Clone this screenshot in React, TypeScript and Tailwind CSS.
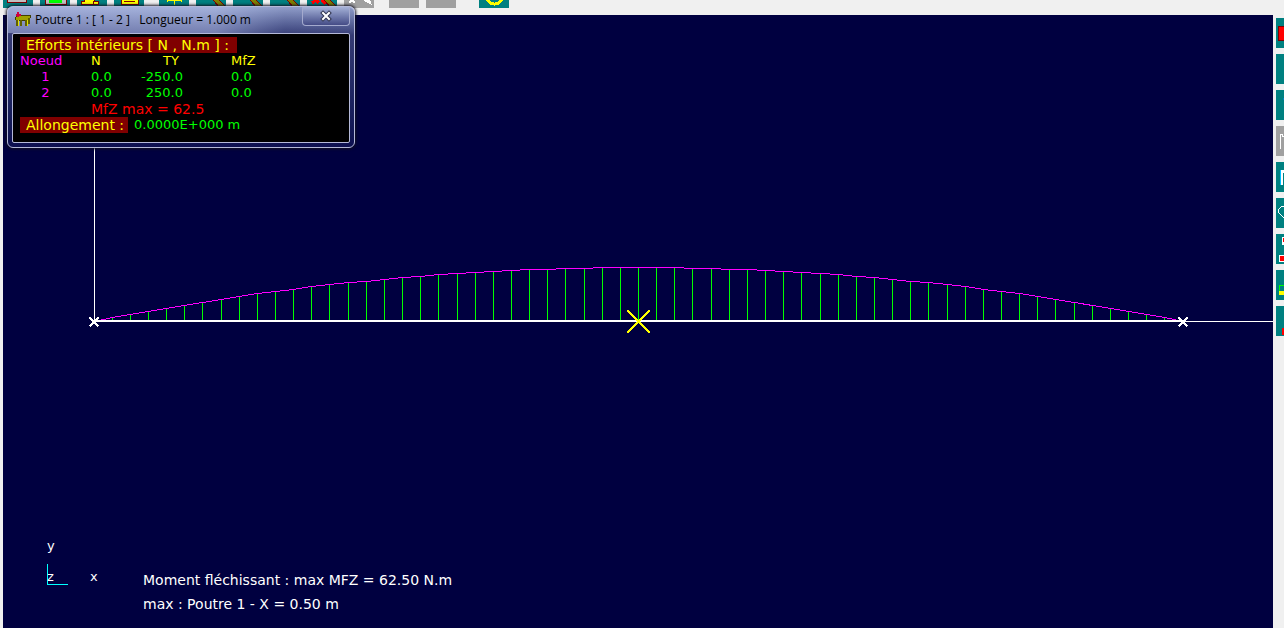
import type { ReactNode } from 'react';

type Tool = { label: string; disabled?: boolean; gap?: string; icon?: ReactNode };

const PENCIL = (
  <g>
    <path d="M17 0h6l7 7-2 1h-5z" fill="#808000" />
    <path d="M17 0l7 8M23 0l7 7" stroke="#800000" />
  </g>
);

const TOP_TOOLS: Tool[] = [
  { label: 'Nouveau', icon: <path d="M4 -4h19v6H4z" fill="#c0c0c0" stroke="#800000" /> },
  {
    label: 'Enregistrer',
    gap: 'ml-[7px]',
    icon: (
      <g>
        <path d="M5 -4h21v8H5z" fill="#c0c0c0" stroke="#800000" />
        <path d="M9 -4h13v7H9z" fill="#00ff00" />
      </g>
    ),
  },
  {
    label: 'Ouvrir',
    gap: 'ml-[7px]',
    icon: <path d="M4 4V1h3v-5h10V1h4v3H4zM16 4v-3h5" fill="#ffff00" stroke="#800000" />,
  },
  {
    label: 'Note',
    gap: 'ml-[7px]',
    icon: (
      <g>
        <path d="M7 -4h17v8H7z" fill="#ffff00" stroke="#800000" />
        <path d="M10 1h11" stroke="#800000" />
      </g>
    ),
  },
  {
    label: 'Noeuds',
    gap: 'ml-[15px]',
    icon: <path d="M15 0v5M8 0h14M8 0v2M22 0v2" fill="none" stroke="#ffff00" />,
  },
  { label: 'Poutres', gap: 'ml-[7px]', icon: PENCIL },
  { label: 'Liaisons', gap: 'ml-[7px]', icon: PENCIL },
  { label: 'Charges', gap: 'ml-[7px]', icon: PENCIL },
  {
    label: 'Supprimer',
    gap: 'ml-[7px]',
    icon: (
      <g>
        <path d="M5 3l4-3 3 3M15 0l4 4" fill="none" stroke="#ff0000" strokeWidth="3" />
        {PENCIL}
      </g>
    ),
  },
  {
    label: 'Calculer',
    gap: 'ml-[7px]',
    disabled: true,
    icon: <path d="M5 3l3-3 3 3M20 0l6 3-1-3z" fill="none" stroke="#ffffff" strokeWidth="2" />,
  },
  { label: 'Annuler', gap: 'ml-[15px]', disabled: true },
  { label: 'Rétablir', gap: 'ml-[7px]', disabled: true },
  {
    label: 'Aide',
    gap: 'ml-[23px]',
    icon: <circle cx="15.5" cy="-4" r="8" fill="none" stroke="#ffff00" strokeWidth="3" />,
  },
];

const SIDE_TOOLS: Tool[] = [
  { label: 'Structure', icon: <path d="M2.500 8.500h20v14h-20z" fill="#ff0000" stroke="#800000" /> },
  { label: 'Déformée' },
  { label: 'Réactions', icon: <path d="M7 8h2v2H7z" fill="#0080c0" /> },
  {
    label: 'Effort normal',
    disabled: true,
    icon: <path d="M4.500 23V8.500h2v2h3" fill="none" stroke="#ffffff" />,
  },
  {
    label: 'Moment fléchissant',
    icon: (
      <g>
        <path d="M4 8h2v15H4z" fill="#00c0ff" />
        <path d="M5 8h5v3H7v12H5z" fill="#ffffff" />
        <path d="M8 11h2v12H8z" fill="#ff8040" />
      </g>
    ),
  },
  {
    label: 'Contraintes',
    icon: <path d="M9 9.500L7.500 8.500H5.500L2.500 11.500V14.500L8.500 20.500" fill="none" stroke="#ffffff" />,
  },
  {
    label: 'Paramètres',
    icon: (
      <g>
        <path d="M6 3h8v8H6z" fill="#ffffff" />
        <path d="M7 4h6v4H7zM4 22h10v5H4z" fill="#ff0000" />
        <path d="M3.500 21.500h11v6h-11z" fill="none" stroke="#ffffff" />
      </g>
    ),
  },
  {
    label: 'Légende',
    icon: (
      <g>
        <path d="M3.500 21v-5l2-1h6" fill="none" stroke="#00ff00" />
        <path d="M3 21h10v4H3z" fill="#ffff00" />
      </g>
    ),
  },
  { label: 'Imprimer', icon: <path d="M6 22h10v7H6z" fill="#ff0000" /> },
];

const FORCES = [
  { node: 1, n: '0.0', ty: '-250.0', mfz: '0.0' },
  { node: 2, n: '0.0', ty: '250.0', mfz: '0.0' },
];

// Beam geometry in canvas units
const X0 = 91;
const X1 = 1180;
const BASE = 306;
const PEAK = 54;
const STEPS = 60;

const samples = Array.from({ length: STEPS + 1 }, (_, i) => {
  const t = i / STEPS;
  return {
    x: Math.floor(X0 + t * (X1 - X0)) + 0.5,
    y: Math.round(BASE - PEAK * 4 * t * (1 - t)) + 0.5,
  };
});

function ToolButton({ tool, side }: { tool: Tool; side?: boolean }) {
  return (
    <button
      type="button"
      aria-label={tool.label}
      disabled={tool.disabled}
      className={`block w-[30px] shrink-0 ${side ? 'h-[30px]' : 'h-2'} ${tool.gap ?? ''} ${
        tool.disabled ? 'bg-[#a0a0a0]' : 'bg-[#008080]'
      }`}
    >
      {tool.icon && (
        <svg className={side ? 'block h-[30px] w-[30px]' : 'block h-2 w-[30px]'} shapeRendering="crispEdges" aria-hidden="true">
          {tool.icon}
        </svg>
      )}
    </button>
  );
}

function MomentDiagram() {
  return (
    <svg viewBox="0 0 1270 613" className="block h-auto w-full" shapeRendering="crispEdges" role="img" aria-label="Moment fléchissant">
      <path d="M91.500 0V306M91 306.500H1270" stroke="#ffffff" />
      {samples.slice(1, -1).map((p) => (
        <path key={p.x} d={`M${p.x} ${p.y}V306`} stroke="#00ff00" />
      ))}
      <polyline points={samples.map((p) => `${p.x},${p.y}`).join(' ')} fill="none" stroke="#ff00ff" />
      <path d="M91 306H1180" stroke="#ffffff" strokeWidth="2" />
      <path d="M86.500 302.500l9 9M95.500 302.500l-9 9M1175.500 302.500l9 9M1184.500 302.500l-9 9" stroke="#ffffff" strokeWidth="2" />
      <path d="M625 296l21 21M646 296l-21 21" stroke="#ffff00" strokeWidth="2" strokeLinecap="square" />
      <path d="M44.500 549V569.500H65" fill="none" stroke="#00ffff" />
      <g fill="#ffffff" className="font-['DejaVu_Sans',sans-serif] text-[13px]">
        <text x="44" y="535">y</text>
        <text x="44" y="566">z</text>
        <text x="87" y="566">x</text>
      </g>
    </svg>
  );
}

function BeamWindow() {
  return (
    <section
      aria-label="Poutre 1"
      className="absolute left-[7px] top-[6px] w-[348px] rounded-md border border-[#b4b9d8] bg-linear-to-b from-[#b4c4ea] via-[#353b75] via-20% to-[#0d1050] px-1 pb-1 shadow-[0_0_3px_1px_#101020]"
    >
      <div className="-mx-1 flex h-[26px] items-start justify-between rounded-t-md bg-linear-to-r from-[#9ba6d2]/60 from-60% to-[#3d447c]/30 to-80% pl-[7px] pr-1">
        <div className="flex items-center gap-1 pt-[5px]">
          <svg className="h-4 w-4" shapeRendering="crispEdges" aria-hidden="true">
            <path d="M0 6l3-3h12l1 2-3 3H1z" fill="#a0a000" stroke="#404000" />
            <path d="M2 8v6M6 8v6M11 8v6M14 6v6" stroke="#606000" strokeWidth="2" />
            <path d="M3 8v6M12 8v6" stroke="#e0e000" />
            <path d="M3 0v5M1 3h5" stroke="#d00040" strokeWidth="2" />
          </svg>
          <h1 className="whitespace-pre font-['Open_Sans',sans-serif] text-xs leading-4 text-black">
            {'Poutre 1 : [ 1 - 2 ]   Longueur = 1.000 m'}
          </h1>
        </div>
        <button
          type="button"
          aria-label="Fermer"
          className="flex h-[19px] w-12 items-center justify-center rounded-b border border-t-0 border-[#a4aace] bg-linear-to-b from-[#a6b2d8] to-[#454c86]"
        >
          <svg className="h-3 w-3" aria-hidden="true">
            <path d="M3 3l6 6M9 3l-6 6" stroke="#303550" strokeWidth="4" strokeLinecap="square" />
            <path d="M3 3l6 6M9 3l-6 6" stroke="#ffffff" strokeWidth="2" strokeLinecap="square" />
          </svg>
        </button>
      </div>

      <div className="rounded-xs border border-[#b4b9d8] bg-black px-[7px] pb-[9px] pt-[3px] font-['DejaVu_Sans',sans-serif] text-[13px] leading-4 text-[#00ff00]">
        <h2 className="w-fit bg-[#800000] pl-1.5 pr-2 text-[14px] leading-4 text-[#ffff00]">Efforts intérieurs [ N , N.m ] :</h2>
        <table className="w-full table-fixed border-collapse">
          <colgroup>
            <col className="w-[71px]" />
            <col className="w-10" />
            <col className="w-[52px]" />
            <col />
          </colgroup>
          <thead>
            <tr className="text-left text-[#ffff00]">
              <th className="p-0 font-normal text-[#ff00ff]">Noeud</th>
              <th className="p-0 font-normal">N</th>
              <th className="p-0 pr-1 text-right font-normal">TY</th>
              <th className="p-0 pl-12 font-normal">MfZ</th>
            </tr>
          </thead>
          <tbody>
            {FORCES.map((f) => (
              <tr key={f.node}>
                <td className="p-0 pr-5 text-center text-[#ff00ff]">{f.node}</td>
                <td className="p-0">{f.n}</td>
                <td className="p-0 text-right">{f.ty}</td>
                <td className="p-0 pl-12">{f.mfz}</td>
              </tr>
            ))}
            <tr className="text-[#ff0000]">
              <td className="p-0" />
              <td colSpan={3} className="p-0 text-[14px] leading-4">
                MfZ max = 62.5
              </td>
            </tr>
          </tbody>
        </table>
        <p className="flex gap-1.5">
          <span className="bg-[#800000] pl-1.5 pr-1 text-[14px] leading-4 text-[#ffff00]">Allongement :</span>
          <span>0.0000E+000 m</span>
        </p>
      </div>
    </section>
  );
}

export default function App() {
  return (
    <div className="relative flex h-screen flex-col overflow-hidden bg-[#f0f0f0]">
      <header className="flex h-[15px] shrink-0 items-start pl-[3px]">
        {TOP_TOOLS.map((tool) => (
          <ToolButton key={tool.label} tool={tool} />
        ))}
      </header>

      <div className="flex min-h-0 flex-1 pl-[3px]">
        <main className="relative min-w-0 flex-1 overflow-hidden bg-[#000040]">
          <MomentDiagram />
          <div className="absolute bottom-3 left-[140px] font-['DejaVu_Sans',sans-serif] text-[14px] leading-6 text-white">
            <p>Moment fléchissant : max MFZ = 62.50 N.m</p>
            <p>max : Poutre 1 - X = 0.50 m</p>
          </div>
        </main>
        <aside className="flex w-[11px] shrink-0 flex-col gap-1.5 overflow-hidden pl-[3px] pt-[3px]">
          {SIDE_TOOLS.map((tool) => (
            <ToolButton key={tool.label} tool={tool} side />
          ))}
        </aside>
      </div>

      <BeamWindow />
    </div>
  );
}
